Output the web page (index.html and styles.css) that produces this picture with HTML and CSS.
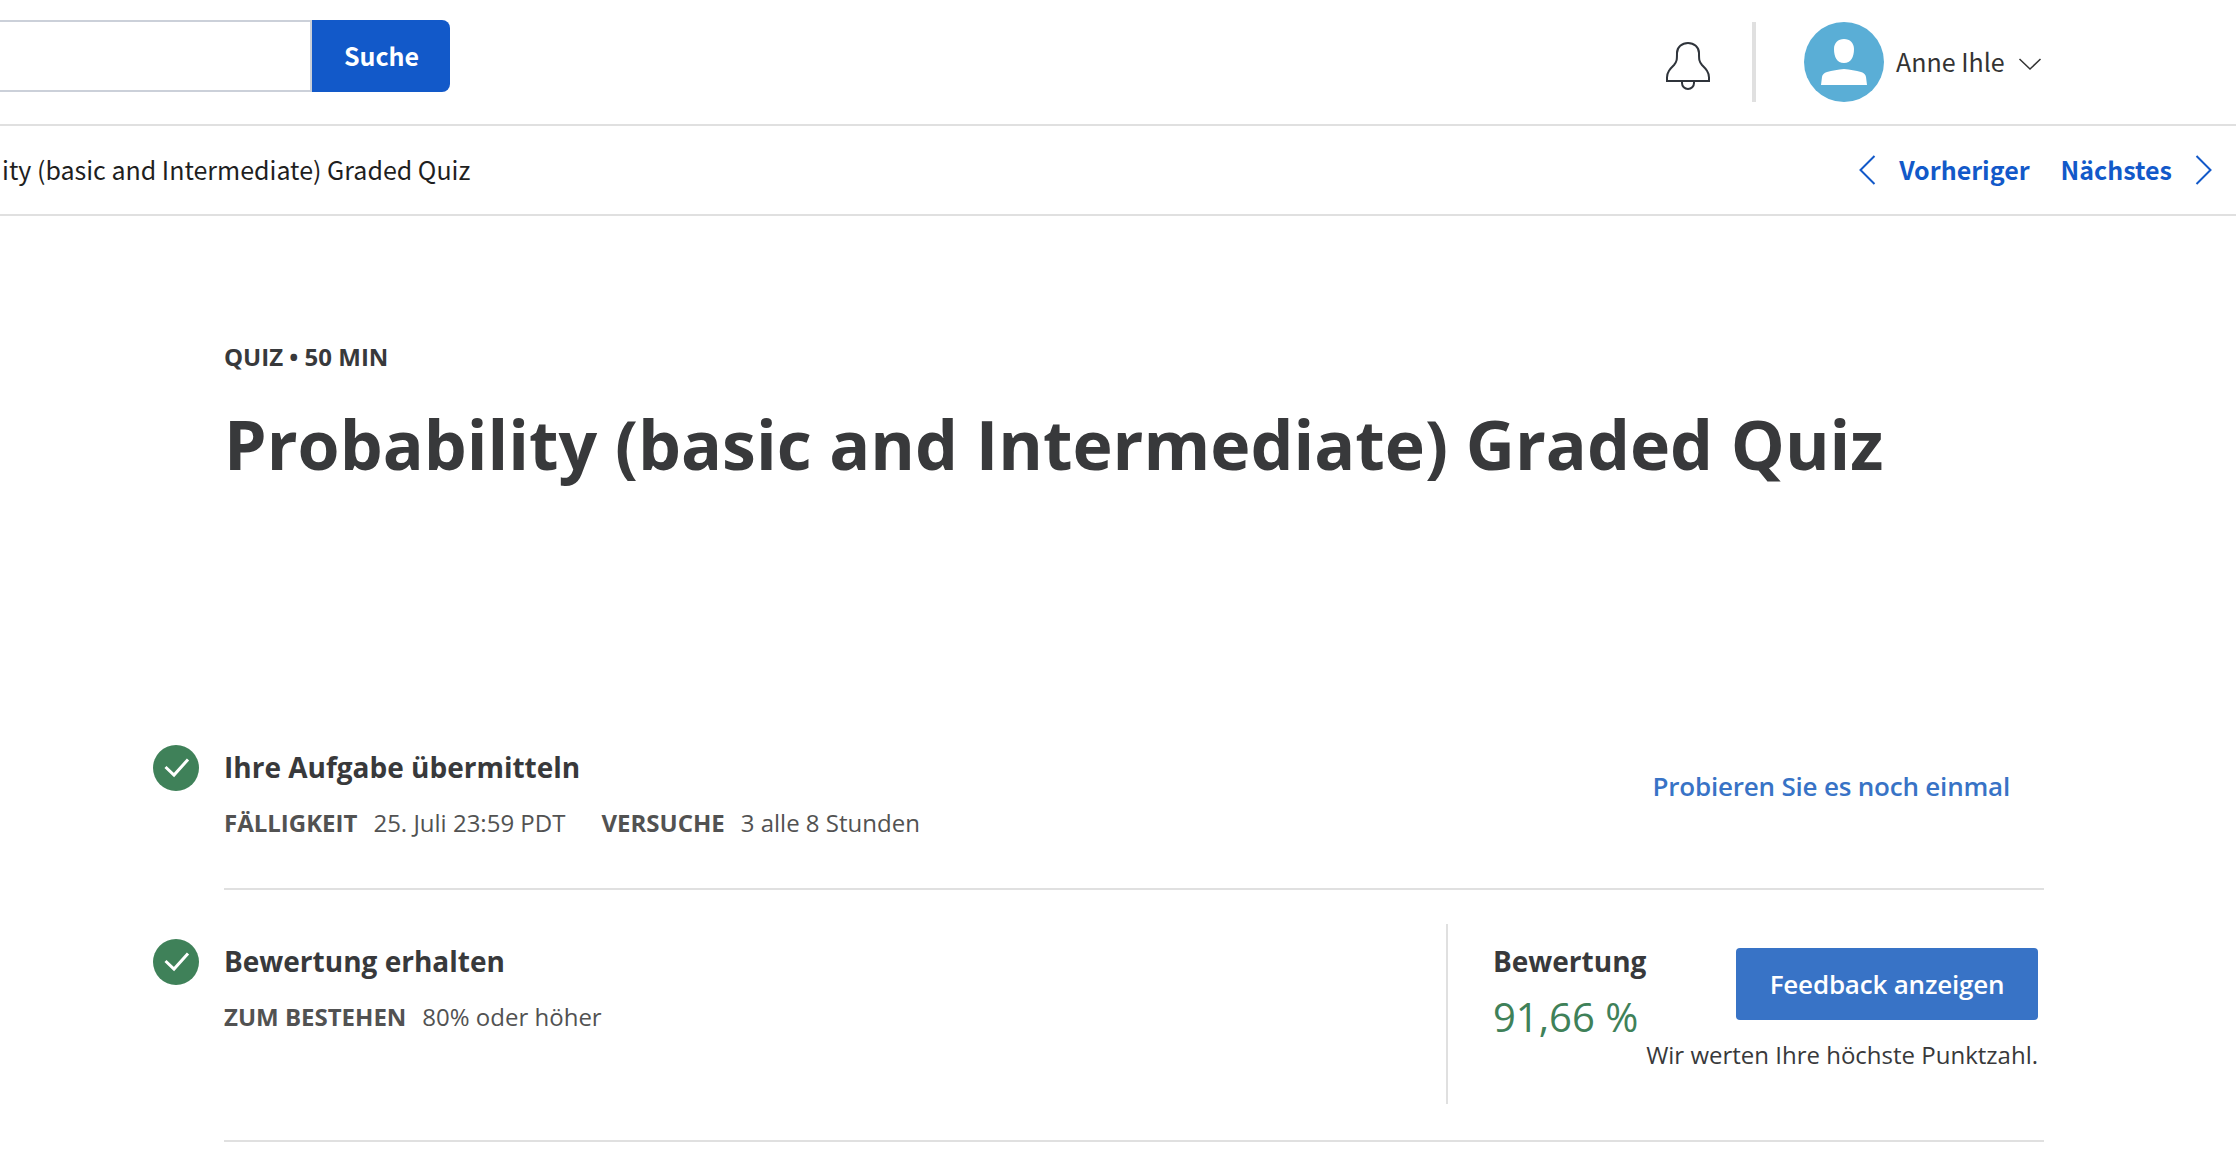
FILE: index.html
```html
<!DOCTYPE html>
<html lang="de">
<head>
<meta charset="utf-8">
<title>Graded Quiz</title>
<link rel="stylesheet" href="styles.css">
</head>
<body>
<header class="topbar">
  <form class="search">
    <div class="search-field"></div>
    <button class="search-button" type="button">Suche</button>
  </form>
  <div class="account">
    <svg class="bell" width="46" height="50" viewBox="0 0 46 50" fill="none" stroke="#2f343b" stroke-width="2"><path d="M2 40V36.500C2 31 5 28 9 24C12 20.500 12 18.500 12 12C12 6 17 2 23 2S34 6 34 12C34 18.500 34 20.500 37 24C41 28 44 31 44 36.500V40Z"/><path d="M17 40V42A6 6 0 0 0 29 42V40"/></svg>
    <div class="divider"></div>
    <svg class="avatar" width="80" height="80" viewBox="0 0 80 80"><circle cx="40" cy="40" r="40" fill="#5aaed6"/><path fill="#fff" d="M40 17C46 17 50 21 50 27C50 35 47 41 40 41S30 35 30 27C30 21 34 17 40 17ZM17 63L18 55C18.400 52.500 20 51 23 50C28 48.500 34 47.700 40 47C46 47.700 52 48.500 57 50C60 51 61.600 52.500 62 55L63 63Z"/></svg>
    <span class="user-name">Anne Ihle</span>
    <svg class="caret" width="24" height="14" viewBox="0 0 24 14" fill="none" stroke="#333" stroke-width="1.500"><path d="M1.500 2L12 12L22.500 2"/></svg>
  </div>
</header>
<nav class="breadcrumb">
  <span class="crumb">ity (basic and Intermediate) Graded Quiz</span>
  <div class="pager">
    <svg width="18" height="32" viewBox="0 0 18 32" fill="none" stroke="#1259c9" stroke-width="2"><path d="M16.500 2L2.500 16L16.500 30"/></svg>
    <a class="prev">Vorheriger</a>
    <a class="next">Nächstes</a>
    <svg width="18" height="32" viewBox="0 0 18 32" fill="none" stroke="#1259c9" stroke-width="2"><path d="M1.500 2L15.500 16L1.500 30"/></svg>
  </div>
</nav>
<main class="content">
  <div class="intro">
    <p class="kind">QUIZ • 50 MIN</p>
    <h1 class="title">Probability (basic and Intermediate) Graded Quiz</h1>
  </div>
  <section class="step">
    <svg class="check" width="46" height="46" viewBox="0 0 46 46"><circle cx="23" cy="23" r="23" fill="#3f8159"/><path d="M12.500 22L21 30L35 14.500" fill="none" stroke="#fff" stroke-width="3"/></svg>
    <div class="step-body submit">
      <div class="step-text">
        <h2 class="heading">Ihre Aufgabe übermitteln</h2>
        <p class="meta"><b>FÄLLIGKEIT</b><span class="val">25. Juli 23:59 PDT</span><b>VERSUCHE</b><span class="val">3 alle 8 Stunden</span></p>
      </div>
      <a class="retry">Probieren Sie es noch einmal</a>
    </div>
  </section>
  <section class="step">
    <svg class="check" width="46" height="46" viewBox="0 0 46 46"><circle cx="23" cy="23" r="23" fill="#3f8159"/><path d="M12.500 22L21 30L35 14.500" fill="none" stroke="#fff" stroke-width="3"/></svg>
    <div class="step-body graded">
      <div class="step-text">
        <h2 class="heading">Bewertung erhalten</h2>
        <p class="meta"><b>ZUM BESTEHEN</b><span class="val">80% oder höher</span></p>
      </div>
      <div class="result">
        <div class="grade">
          <h2 class="heading">Bewertung</h2>
          <p class="score">91,66 %</p>
        </div>
        <div class="feedback">
          <button class="feedback-button" type="button">Feedback anzeigen</button>
          <p class="note">Wir werten Ihre höchste Punktzahl.</p>
        </div>
      </div>
    </div>
  </section>
</main>
</body>
</html>
```
FILE: styles.css
```css
* { box-sizing: border-box; }
body { margin: 0; background: #fff; color: #38393b; font-family: "Open Sans", sans-serif; }
h1, h2, p { margin: 0; }
svg { display: block; flex: none; }

.topbar { display: flex; justify-content: space-between; align-items: flex-start; height: 126px; border-bottom: 2px solid #e0e0e0; font-family: "Noto Sans CJK SC", sans-serif; }
.search { display: flex; margin: 20px 0 0; }
.search-field { width: 312px; height: 72px; border: 2px solid #cbd0d9; border-left: 0; }
.search-button { width: 138px; height: 72px; padding: 0 0 2px 1px; border: 0; border-radius: 0 8px 8px 0; background: #1259c9; color: #fff; font: bold 25px/70px "Noto Sans CJK SC", sans-serif; }

.account { display: flex; align-items: flex-start; padding-right: 194px; }
.bell { margin-top: 41px; }
.divider { width: 4px; height: 80px; margin: 22px 48px 0 41px; background: #e0e0e0; }
.avatar { margin-top: 22px; }
.user-name { width: 122px; margin: 43px 0 0 12px; color: #333; font-size: 25px; line-height: 36px; }
.caret { margin-top: 57px; }

.breadcrumb { display: flex; justify-content: space-between; align-items: center; height: 90px; padding: 0 23px 0 2px; border-bottom: 2px solid #e0e0e0; font: 25px/36px "Noto Sans CJK SC", sans-serif; color: #1f1f1f; }
.crumb, .prev, .next { padding-bottom: 2px; }
.pager { display: flex; align-items: center; color: #1259c9; font-weight: bold; }
.prev { margin: 0 31px 0 23px; }
.next { margin-right: 23px; }

.content { padding: 125px 0 0 153px; }
.intro { height: 355px; padding-left: 71px; }
.kind { font-size: 24px; line-height: 32px; font-weight: 700; }
.title { margin-top: 27px; font-size: 68px; line-height: 88px; font-weight: 700; white-space: nowrap; }

.step { display: grid; grid-template-columns: 71px 1820px; }
.check { margin-top: 49px; }
.step-body { display: flex; justify-content: space-between; align-items: flex-start; border-bottom: 2px solid #e0e0e0; }
.submit { height: 194px; }
.graded { height: 252px; }
.step-text { padding-top: 51px; }
.heading { font-size: 28px; line-height: 40px; font-weight: 700; }
.meta { margin-top: 20px; font-size: 24px; line-height: 32px; color: #525252; }
.val { margin: 0 36px 0 16px; }
.retry { margin: 72px 34px 0 0; font-size: 26px; line-height: 36px; font-weight: 600; letter-spacing: -0.2px; color: #3873c6; }
.result { display: flex; width: 598px; height: 180px; margin-top: 34px; padding: 0 6px 0 45px; border-left: 2px solid #e0e0e0; }
.grade { flex: 1; min-width: 0; padding-top: 17px; white-space: nowrap; }
.score { margin-top: 10px; font-size: 40px; line-height: 52px; color: #3f8159; }
.feedback { display: flex; flex-direction: column; align-items: flex-end; padding-top: 24px; }
.feedback-button { width: 302px; height: 72px; padding: 0; border: 0; border-radius: 4px; background: #3873c6; color: #fff; font: 600 26px/72px "Open Sans", sans-serif; letter-spacing: -0.2px; }
.note { margin-top: 19px; font-size: 24px; line-height: 32px; white-space: nowrap; }
```
